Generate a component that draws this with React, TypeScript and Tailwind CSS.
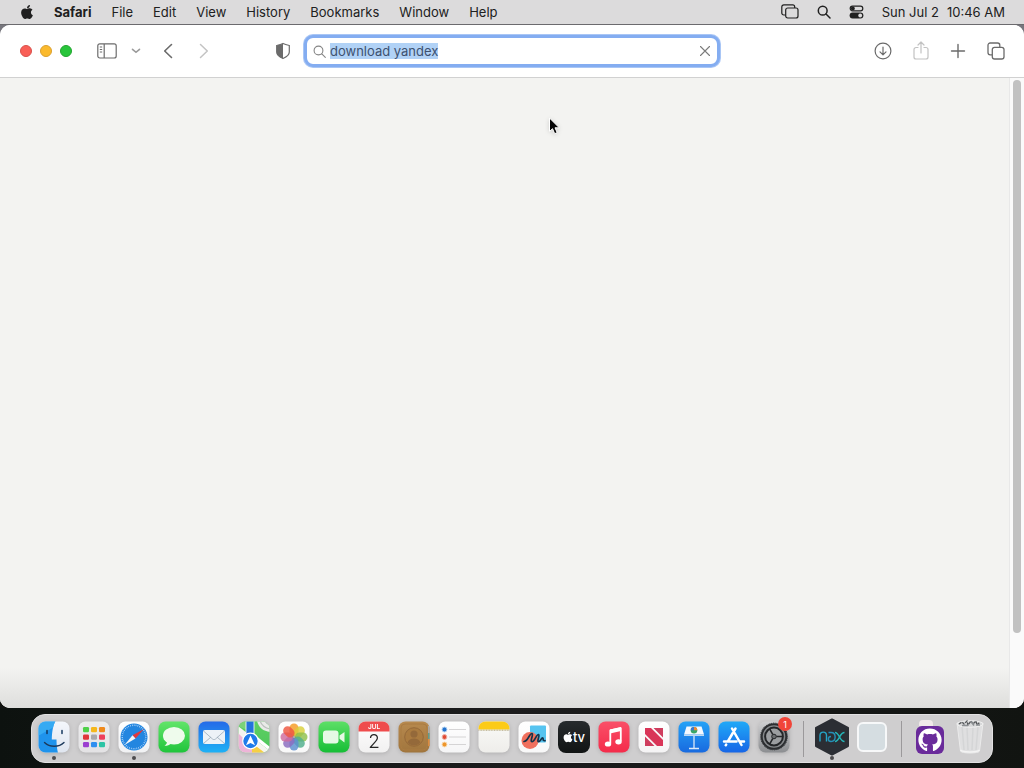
import { useEffect, useRef, useState } from 'react';
import type { ReactNode } from 'react';
import { FaApple, FaGithub } from 'react-icons/fa';

interface DockItem {
  name: string;
  icon: ReactNode;
  running?: boolean;
  badge?: number;
}

const menus = ['File', 'Edit', 'View', 'History', 'Bookmarks', 'Window', 'Help'];

const petals = [
  { angle: 0, color: '#f59b23' },
  { angle: 45, color: '#d9cf3a' },
  { angle: 90, color: '#8fc04b' },
  { angle: 135, color: '#4fae8c' },
  { angle: 180, color: '#5b8fd0' },
  { angle: 225, color: '#8a6bbf' },
  { angle: 270, color: '#cf6a9c' },
  { angle: 315, color: '#ee5540' },
];

const launchpadDots = ['#4fd14a', '#f5b81c', '#f08a1c', '#e0363a', '#a9a9ad', '#ee3f5c', '#9b3fd0', '#2f8ff0', '#2cc4a5'];

function Tile({ id, from, to, children }: { id: string; from: string; to: string; children?: ReactNode }) {
  return (
    <svg viewBox="0 0 32 32" className="h-8 w-8 drop-shadow-sm" aria-hidden="true">
      <defs>
        <linearGradient id={`${id}-bg`} x1="0" y1="0" x2="0" y2="1">
          <stop offset="0" stopColor={from} />
          <stop offset="1" stopColor={to} />
        </linearGradient>
        <clipPath id={`${id}-clip`}>
          <rect x="0.5" y="0.5" width="31" height="31" rx="7" />
        </clipPath>
      </defs>
      <g clipPath={`url(#${id}-clip)`}>
        <rect width="32" height="32" fill={`url(#${id}-bg)`} />
        {children}
      </g>
    </svg>
  );
}

function FinderIcon() {
  return (
    <Tile id="finder" from="#f4f7fc" to="#dfe5ef">
      <path d="M0 0h17.5c-2.3 4.5-3.5 9.500-3.700 18.500h4.700c0 5 .5 9.500 1.500 13.500H0z" fill="#1f93ec" />
      <path d="M0 0h17.500c-1 2-1.800 4-2.400 6.500L0 15z" fill="#45b9f8" opacity=".6" />
      <path d="M9 9.500v3M24 9.500v3" stroke="#15375e" strokeWidth="1.500" strokeLinecap="round" />
      <path d="M6.500 21.500c5 5 14.500 5 19.500 0" fill="none" stroke="#1d3a5c" strokeWidth="1.400" strokeLinecap="round" />
    </Tile>
  );
}

function LaunchpadIcon() {
  return (
    <Tile id="launchpad" from="#ededee" to="#e3e2e4">
      {launchpadDots.map((color, i) => (
        <rect key={color} x={5 + (i % 3) * 8} y={6 + Math.floor(i / 3) * 7.500} width="6" height="5.300" rx="1.200" fill={color} />
      ))}
    </Tile>
  );
}

function SafariIcon() {
  return (
    <Tile id="safari" from="#ffffff" to="#f0f1f3">
      <circle cx="16" cy="16" r="13.500" fill="#2386e0" />
      <circle cx="16" cy="16" r="11.800" fill="none" stroke="#d5eaff" strokeWidth="1.600" strokeDasharray=".6 1.300" />
      <path d="M26 8 17.500 17.500 14.500 14.300z" fill="#e0393e" />
      <path d="M6.500 24 14.500 14.300 17.500 17.500z" fill="#f4f6f8" />
    </Tile>
  );
}

function MessagesIcon() {
  return (
    <Tile id="messages" from="#63e56a" to="#1fc43b">
      <ellipse cx="16" cy="14.800" rx="11" ry="8.800" fill="#eefbec" />
      <path d="M9 20c.2 2-.7 3.600-2.500 4.800 3 0 5-.8 6.500-2.300z" fill="#eefbec" />
    </Tile>
  );
}

function MailIcon() {
  return (
    <Tile id="mail" from="#2569e8" to="#1eb2f5">
      <rect x="5" y="9" width="22" height="14" rx="2" fill="#edf2f7" />
      <path d="m5.500 10 9 8c1 .8 2 .8 3 0l9-8M5.500 22.500l7.500-6.500M26.500 22.500 19 16" fill="none" stroke="#9aa9b8" strokeWidth=".8" />
    </Tile>
  );
}

function MapsIcon() {
  return (
    <Tile id="maps" from="#5fcf63" to="#4cc65a">
      <path d="M0 5l32 25v2H0z" fill="#f5f4f0" />
      <path d="M0 12l20 20H0z" fill="#edb4d8" />
      <path d="M14 22l13 10H14z" fill="#f6cf45" />
      <path d="M0 0h9v9L0 5z" fill="#7bd278" />
      <path d="M19 0c2 7 6 10 13 11V0z" fill="#e9eae7" />
      <path d="M22 0c2 5 5 7 10 8M27 0c1 2 3 3.500 5 4" fill="none" stroke="#b9bebc" strokeWidth="1.200" />
      <path d="M17 14l15 12v4L14 16z" fill="#fff" />
      <path d="M8 0h8v17H8z" fill="#2373dc" stroke="#fff" strokeWidth=".8" />
      <circle cx="12.500" cy="20" r="7.800" fill="#1f7bea" stroke="#fff" strokeWidth="1.200" />
      <path d="M12.500 14.500l4.500 9.800-4.500-2.400L8 24.300z" fill="#fff" />
    </Tile>
  );
}

function PhotosIcon() {
  return (
    <Tile id="photos" from="#ffffff" to="#f8f8f8">
      {petals.map(({ angle, color }) => (
        <rect key={angle} x="11.500" y="2.500" width="9" height="12.500" rx="4.500" fill={color} opacity=".82" transform={`rotate(${angle} 16 16)`} />
      ))}
      <circle cx="16" cy="16" r="1.500" fill="#665b55" opacity=".5" />
    </Tile>
  );
}

function FaceTimeIcon() {
  return (
    <Tile id="facetime" from="#5ee067" to="#15bd35">
      <rect x="5" y="9.500" width="15.500" height="13" rx="3" fill="#e6f9e5" />
      <path d="M21.500 14.500 26.500 11v10.500l-5-3.700z" fill="#e6f9e5" />
    </Tile>
  );
}

function CalendarIcon() {
  return (
    <Tile id="calendar" from="#ffffff" to="#f1f0f0">
      <rect width="32" height="10.500" fill="#ef4c4d" />
      <text x="16" y="8.200" textAnchor="middle" fontFamily="Inter, sans-serif" fontSize="6.500" fontWeight="600" fill="#fff">JUL</text>
      <text x="16" y="26.500" textAnchor="middle" fontFamily="Inter, sans-serif" fontSize="19" fontWeight="300" fill="#252525">2</text>
    </Tile>
  );
}

function ContactsIcon() {
  return (
    <Tile id="contacts" from="#b88a4f" to="#a0753d">
      <path d="M30 5h2v7h-2z" fill="#a8a8a8" />
      <path d="M30 12h2v6h-2z" fill="#5e9c8d" />
      <path d="M30 18h2v7h-2z" fill="#db8b3f" />
      <rect x="3" y="3" width="26" height="26" rx="4" fill="none" stroke="#aa7c43" />
      <circle cx="16" cy="16" r="9.300" fill="#aa7b40" stroke="#94693a" />
      <circle cx="16" cy="13" r="3.600" fill="#94693a" />
      <path d="M9.500 21.500c1.500-5.500 11.500-5.500 13 0-3.500 4-9.500 4-13 0z" fill="#94693a" />
    </Tile>
  );
}

function RemindersIcon() {
  return (
    <Tile id="reminders" from="#ffffff" to="#f5f5f6">
      <path d="M11 8.500h17M11 16h17M11 23.500h17" stroke="#cbcacc" strokeWidth=".8" />
      <circle cx="6.500" cy="8.500" r="2.400" fill="#2674cf" stroke="#a5c8ec" />
      <circle cx="6.500" cy="16" r="2.400" fill="#e04b35" stroke="#efb4a8" />
      <circle cx="6.500" cy="23.500" r="2.400" fill="#ee962c" stroke="#f7d3a3" />
    </Tile>
  );
}

function NotesIcon() {
  return (
    <Tile id="notes" from="#fafaf7" to="#eeedea">
      <rect width="32" height="8.500" fill="#fccb17" />
      <path d="M0 9.200h32" stroke="#a89a6b" strokeWidth=".9" strokeDasharray="1 .6" />
    </Tile>
  );
}

function FreeformIcon() {
  return (
    <Tile id="freeform" from="#ffffff" to="#f8f8f8">
      <rect x="12" y="4.500" width="16" height="17" rx="1" fill="#56c4f0" />
      <circle cx="12" cy="19.500" r="8.500" fill="#f0705e" />
      <path d="M6 20.500c4 0 5.500-8.500 8-8 2 .7-2.500 8 0 8.200 2.500.2 4.500-7.700 6.500-7.200 1.800.6-2 7 0 7.200 1.800.2 2.800-4.200 4.300-3.700 1 .6-.7 3 2.200 2.700" fill="none" stroke="#14334a" strokeWidth="1.700" strokeLinecap="round" />
    </Tile>
  );
}

function TvIcon() {
  return (
    <span className="flex h-8 w-8 items-center justify-center rounded-lg bg-linear-to-b from-[#272b2d] to-[#111414] text-white">
      <FaApple className="h-3 w-2.5" />
      <span className="text-[13px] leading-4 font-medium">tv</span>
    </span>
  );
}

function MusicIcon() {
  return (
    <Tile id="music" from="#fa5068" to="#f42b4a">
      <path d="M12.300 22.500V9.500l10.500-2.300v13" fill="none" stroke="#fff" strokeWidth="1.800" strokeLinejoin="round" />
      <path d="M12 8.500l11-2.500v4l-11 2.500z" fill="#fff" />
      <ellipse cx="10" cy="23" rx="3.200" ry="2.600" fill="#fff" />
      <ellipse cx="20.500" cy="20.800" rx="3.200" ry="2.600" fill="#fff" />
    </Tile>
  );
}

function NewsIcon() {
  return (
    <Tile id="news" from="#ffffff" to="#f4f3f4">
      <path d="M7 7h6l12 12v6h-6L7 13z" fill="#d93558" />
      <path d="M15.500 7H25v9.500zM7 15.500V25h9.500z" fill="#cf3d5e" />
    </Tile>
  );
}

function KeynoteIcon() {
  return (
    <Tile id="keynote" from="#25a3f7" to="#1869df">
      <path d="M8.500 5.500h15l2.500 8H6z" fill="#f3f8ff" />
      <path d="M6 13.500h20v1.500H6z" fill="#bdd8f2" />
      <circle cx="16" cy="9.200" r="3.300" fill="#39a668" />
      <path d="M16 5.900a3.300 3.300 0 0 1 3.300 3.300H16z" fill="#ef8a32" />
      <path d="M12.700 9.200A3.300 3.300 0 0 1 16 5.900v3.300z" fill="#3d77d1" />
      <path d="M16 15v12.500M11 27.500h10" stroke="#dceaf8" strokeWidth="1.300" />
    </Tile>
  );
}

function AppStoreIcon() {
  return (
    <Tile id="appstore" from="#20aaf8" to="#1765e6">
      <g fill="none" stroke="#fff" strokeWidth="2.500" strokeLinecap="round">
        <path d="M17.500 7.500 9.800 20.500M14 7.500l9.500 16.500M6 20.500h12.500M22.500 20.500H26M8.200 23.500 7.700 24.300" />
      </g>
    </Tile>
  );
}

function SettingsIcon() {
  return (
    <Tile id="settings" from="#d0d1d3" to="#8b8d90">
      <circle cx="16" cy="15.500" r="12.300" fill="#85888b" stroke="#2b2d30" strokeWidth="2" />
      <circle cx="16" cy="15.500" r="13.300" fill="none" stroke="#3a3d40" strokeWidth="1.200" strokeDasharray="1 .8" />
      <circle cx="16" cy="15.500" r="8.900" fill="#9b9ea1" stroke="#242629" strokeWidth="2" />
      <circle cx="16" cy="15.500" r="2.300" fill="#6a6d70" stroke="#242629" />
      <path d="M18.500 15.500H25M14.700 17.700 11.500 23.300M14.700 13.300 11.500 7.700" stroke="#242629" strokeWidth="1.600" />
    </Tile>
  );
}

function NoxIcon() {
  return (
    <svg viewBox="0 0 36 40" className="h-10 w-9" aria-hidden="true">
      <path d="M18 2.500 34 11v18L18 37.500 2 29V11z" fill="#2b2e34" stroke="#2b2e34" strokeWidth="2" strokeLinejoin="round" />
      <g fill="none" strokeWidth="1.400">
        <path d="M6 24.500v-6c0-4.500 6.500-4.500 6.500 0v6" stroke="#24a5c8" />
        <path d="M14.500 15.500H17c5.500 0 5.500 9 0 9-3.500 0-3.500-5 0-5" stroke="#2590b8" />
        <path d="M21 15.500c4.500 0 4.500 9 9.500 9M30.500 15.500c-5 0-5 9-9.500 9" stroke="#24b5b8" />
      </g>
    </svg>
  );
}

function TrashIcon() {
  return (
    <svg viewBox="0 0 32 36" className="h-9 w-8" aria-hidden="true">
      <path d="M3 4h26l-3.500 28c-.3 2.700-18.700 2.700-19 0z" fill="#dfdfe0" stroke="#ebebeb" />
      <path d="M8 7l2 24M13 8l1 23M19 8l-1 23M24 7l-2 24" stroke="#d4d5d6" strokeWidth="1.500" />
      <path d="M6.500 31c2 2.500 17 2.500 19 0" fill="none" stroke="#f3f3f3" strokeWidth="1.500" />
      <ellipse cx="16" cy="5" rx="13" ry="3.300" fill="#d8d9da" stroke="#f0f0f0" />
      <path d="M5 5l3-2 2 2 3-3 1 4 3-4 2 3 3-3 1 4 3-3" fill="none" stroke="#55585b" strokeWidth="1.300" strokeDasharray="3 1" />
      <path d="M8 6.500h5M17 2.500l3 4M22 6h4" stroke="#8c9093" strokeWidth="1.500" />
    </svg>
  );
}

const apps: DockItem[] = [
  { name: 'Finder', icon: <FinderIcon />, running: true },
  { name: 'Launchpad', icon: <LaunchpadIcon /> },
  { name: 'Safari', icon: <SafariIcon />, running: true },
  { name: 'Messages', icon: <MessagesIcon /> },
  { name: 'Mail', icon: <MailIcon /> },
  { name: 'Maps', icon: <MapsIcon /> },
  { name: 'Photos', icon: <PhotosIcon /> },
  { name: 'FaceTime', icon: <FaceTimeIcon /> },
  { name: 'Calendar', icon: <CalendarIcon /> },
  { name: 'Contacts', icon: <ContactsIcon /> },
  { name: 'Reminders', icon: <RemindersIcon /> },
  { name: 'Notes', icon: <NotesIcon /> },
  { name: 'Freeform', icon: <FreeformIcon /> },
  { name: 'TV', icon: <TvIcon /> },
  { name: 'Music', icon: <MusicIcon /> },
  { name: 'News', icon: <NewsIcon /> },
  { name: 'Keynote', icon: <KeynoteIcon /> },
  { name: 'App Store', icon: <AppStoreIcon /> },
  { name: 'System Settings', icon: <SettingsIcon />, badge: 1 },
];

const recents: DockItem[] = [
  { name: 'Nox', icon: <NoxIcon />, running: true },
  { name: 'Application', icon: <span className="h-[30px] w-[30px] rounded-md border-2 border-[#f7f8f9] bg-[#d5dde1]" /> },
];

const places: DockItem[] = [
  {
    name: 'GitHub folder',
    icon: (
      <span className="flex flex-col items-start">
        <span className="ml-[3px] h-1.5 w-3.5 rounded-t-sm bg-[#f1eaea]" />
        <span className="flex h-7 w-7 items-center justify-center rounded-md bg-[#6a2b9b]">
          <FaGithub className="h-6 w-6 text-white" />
        </span>
      </span>
    ),
  },
  { name: 'Trash', icon: <TrashIcon /> },
];

function DockGroup({ items }: { items: DockItem[] }) {
  return (
    <>
      {items.map((item) => (
        <button key={item.name} type="button" aria-label={item.name} className="relative flex h-full w-10 items-center justify-center pb-1">
          {item.icon}
          {item.running && <span className="absolute bottom-0.5 h-1 w-1 rounded-full bg-[#4c4b4d]" />}
          {item.badge && (
            <span className="absolute top-0.5 right-0.5 flex h-3.5 w-3.5 items-center justify-center rounded-full bg-[#f14539] text-[9px] leading-none text-white">
              {item.badge}
            </span>
          )}
        </button>
      ))}
    </>
  );
}

function Separator() {
  return <span className="mx-2 h-9 w-0.5 border-r border-[#9b999b]" />;
}

function StackIcon({ className }: { className: string }) {
  return (
    <svg viewBox="0 0 18 18" className={className} fill="none" stroke="currentColor" strokeWidth="1.300" aria-hidden="true">
      <rect x="5.300" y="5.300" width="11.700" height="11.700" rx="2.300" />
      <path d="M5 12.800H3.200A2.200 2.200 0 0 1 1 10.600V3.200A2.200 2.200 0 0 1 3.200 1h7.400a2.200 2.200 0 0 1 2.200 2.200V5" />
    </svg>
  );
}

function MenuBar() {
  return (
    <header className="flex h-[25px] shrink-0 items-center border-b border-[#6b6a6e] bg-[#dcdbdc] pr-[19px] pb-px pl-5 text-[13px] leading-4 text-[#202020]">
      <button type="button" aria-label="Apple menu" className="mr-5">
        <FaApple className="h-4 w-[14px]" />
      </button>
      <nav className="flex items-center gap-5">
        <button type="button" className="font-bold">Safari</button>
        {menus.map((menu) => (
          <button key={menu} type="button">{menu}</button>
        ))}
      </nav>
      <div className="ml-auto flex items-center gap-[18px]">
        <button type="button" aria-label="Stage Manager">
          <svg viewBox="0 0 18 15" className="h-[15px] w-[18px]" fill="none" stroke="currentColor" strokeWidth="1.200" aria-hidden="true">
            <rect x="4.700" y="4" width="12.300" height="10" rx="2" />
            <path d="M4.500 11H2.800A2 2 0 0 1 .8 9V2.900A2 2 0 0 1 2.800.9h8.900a2 2 0 0 1 2 2V4" />
          </svg>
        </button>
        <button type="button" aria-label="Spotlight">
          <svg viewBox="0 0 14 14" className="h-3.5 w-3.5" fill="none" stroke="currentColor" strokeWidth="1.500" strokeLinecap="round" aria-hidden="true">
            <circle cx="5.700" cy="5.700" r="4.400" />
            <path d="m9 9 4 4" />
          </svg>
        </button>
        <button type="button" aria-label="Control Center">
          <svg viewBox="0 0 15 14" className="h-3.5 w-[15px]" aria-hidden="true">
            <rect x="1.200" y="1.200" width="12.600" height="4.600" rx="2.300" fill="none" stroke="currentColor" strokeWidth="1.200" />
            <circle cx="3.800" cy="3.500" r="2" fill="currentColor" />
            <rect x=".6" y="7.500" width="13.800" height="6" rx="3" fill="currentColor" />
            <circle cx="11.200" cy="10.500" r="1.900" fill="#dcdbdc" />
          </svg>
        </button>
        <span className="flex gap-2">
          <span>Sun Jul 2</span>
          <time>10:46 AM</time>
        </span>
      </div>
    </header>
  );
}

function Toolbar() {
  const [query, setQuery] = useState('download yandex');
  const inputRef = useRef<HTMLInputElement>(null);

  useEffect(() => {
    inputRef.current?.focus();
    inputRef.current?.select();
  }, []);

  return (
    <div className="grid h-[53px] shrink-0 grid-cols-[1fr_416px_1fr] items-center border-b border-[#d1d1d1] bg-white text-[#6b6b6b]">
      <div className="flex items-center pr-[13px] pl-5">
        <div className="flex gap-2">
          <button type="button" aria-label="Close window" className="h-3 w-3 rounded-full border border-[#d9504b] bg-[#f95f57]" />
          <button type="button" aria-label="Minimize window" className="h-3 w-3 rounded-full border border-[#dba02e] bg-[#fbba2d]" />
          <button type="button" aria-label="Zoom window" className="h-3 w-3 rounded-full border border-[#21a52f] bg-[#28c53b]" />
        </div>
        <button type="button" aria-label="Show sidebar" className="ml-[25px]">
          <svg viewBox="0 0 20 16" className="h-4 w-5" fill="none" stroke="currentColor" strokeWidth="1.200" aria-hidden="true">
            <rect x=".8" y=".8" width="18.400" height="14.200" rx="2" />
            <path d="M7.200 1v14" />
            <path d="M2.800 4h2.400M2.800 6.500h2.400M2.800 9h2.400" strokeWidth="1" />
          </svg>
        </button>
        <button type="button" aria-label="Tab groups" className="ml-3.5 text-[#9b9b9b]">
          <svg viewBox="0 0 10 6" className="h-1.5 w-2.5" fill="none" stroke="currentColor" strokeWidth="1.600" strokeLinecap="round" aria-hidden="true">
            <path d="m1.500 1.300 3.500 3 3.500-3" />
          </svg>
        </button>
        <button type="button" aria-label="Back" className="ml-[22px]">
          <svg viewBox="0 0 10 16" className="h-4 w-2.5" fill="none" stroke="currentColor" strokeWidth="1.600" strokeLinecap="round" strokeLinejoin="round" aria-hidden="true">
            <path d="M8.500 1.500 1.700 8l6.800 6.500" />
          </svg>
        </button>
        <button type="button" aria-label="Forward" disabled className="ml-[26px] text-[#c3c3c3]">
          <svg viewBox="0 0 10 16" className="h-4 w-2.5" fill="none" stroke="currentColor" strokeWidth="1.500" strokeLinecap="round" strokeLinejoin="round" aria-hidden="true">
            <path d="M1.500 1.500 8.300 8l-6.800 6.500" />
          </svg>
        </button>
        <button type="button" aria-label="Privacy report" className="ml-auto">
          <svg viewBox="0 0 16 18" className="h-[18px] w-4" aria-hidden="true">
            <path d="M8 1.500c2 1 4 1.500 6.300 2v6.500c0 3-2.500 4.800-6.300 6.500-3.800-1.700-6.300-3.500-6.300-6.500V3.500C4 3 6 2.500 8 1.500z" fill="none" stroke="currentColor" strokeWidth="1.200" />
            <path d="M8 1.500v15c-3.800-1.700-6.300-3.500-6.300-6.500V3.500C4 3 6 2.500 8 1.500z" fill="currentColor" />
          </svg>
        </button>
      </div>

      <form className="flex h-8 items-center rounded-[9px] border-[3px] border-[#84adf1] bg-white px-1.5 ring-1 ring-[#a9c6f5]" onSubmit={(e) => e.preventDefault()}>
        <label htmlFor="address" aria-label="Search or enter website name" className="mr-1">
          <svg viewBox="0 0 13 13" className="h-[13px] w-[13px]" fill="none" stroke="#858585" strokeWidth="1.100" strokeLinecap="round" aria-hidden="true">
            <circle cx="5.500" cy="5.500" r="4.400" />
            <path d="m8.800 8.800 3.500 3.500" />
          </svg>
        </label>
        <input
          id="address"
          ref={inputRef}
          type="text"
          value={query}
          onChange={(e) => setQuery(e.target.value)}
          className="h-4 min-w-0 flex-1 bg-transparent text-[13px] leading-4 text-[#3d5170] outline-none selection:bg-[#b1d2f6] selection:text-[#3d5170]"
        />
        <button type="button" aria-label="Clear" onClick={() => setQuery('')}>
          <svg viewBox="0 0 12 12" className="h-3 w-3" fill="none" stroke="#7b7b7b" strokeWidth="1.100" strokeLinecap="round" aria-hidden="true">
            <path d="m1.500 1.500 9 9M10.500 1.500l-9 9" />
          </svg>
        </button>
      </form>

      <div className="flex items-center justify-end gap-[21px] pr-[19px]">
        <button type="button" aria-label="Downloads">
          <svg viewBox="0 0 18 18" className="h-[18px] w-[18px]" fill="none" stroke="currentColor" strokeWidth="1.200" strokeLinecap="round" strokeLinejoin="round" aria-hidden="true">
            <circle cx="9" cy="9" r="7.900" />
            <path d="M9 5v7.500M6 9.800l3 3 3-3" />
          </svg>
        </button>
        <button type="button" aria-label="Share" disabled className="text-[#c2c2c2]">
          <svg viewBox="0 0 16 20" className="h-5 w-4" fill="none" stroke="currentColor" strokeWidth="1.200" strokeLinecap="round" strokeLinejoin="round" aria-hidden="true">
            <path d="M5 6.500H3a2 2 0 0 0-2 2V16a2 2 0 0 0 2 2h10a2 2 0 0 0 2-2V8.500a2 2 0 0 0-2-2h-2M8 12V1.200M5 4l3-3 3 3" />
          </svg>
        </button>
        <button type="button" aria-label="New tab">
          <svg viewBox="0 0 16 16" className="h-4 w-4" fill="none" stroke="currentColor" strokeWidth="1.400" strokeLinecap="round" aria-hidden="true">
            <path d="M8 1.500v13M1.500 8h13" />
          </svg>
        </button>
        <button type="button" aria-label="Tab overview">
          <StackIcon className="h-[18px] w-[18px]" />
        </button>
      </div>
    </div>
  );
}

export default function App() {
  return (
    <div className="flex h-screen flex-col overflow-hidden bg-[#10120f] font-['Inter',sans-serif]">
      <MenuBar />

      <div className="flex min-h-0 flex-1 bg-linear-to-b from-[#77767d] from-10% to-[#10120f] to-30%">
        <main className="relative flex min-w-0 flex-1 flex-col overflow-hidden rounded-[10px] bg-white">
          <Toolbar />
          <div className="flex min-h-0 flex-1">
            <div className="flex flex-1 flex-col justify-end bg-[#f3f3f1]">
              <div className="h-10 bg-linear-to-b from-[#f3f3f1] to-[#dededc]" />
            </div>
            <div className="w-[15px] border-l border-[#e8e8e8] bg-[#fafafa] px-[3px] pt-0.5">
              <div className="h-[88%] w-2 rounded-full bg-[#c1c1c1]" />
            </div>
          </div>
          <svg viewBox="0 0 14 20" className="absolute top-[92px] left-[548px] h-5 w-3.5 drop-shadow-sm" aria-hidden="true">
            <path d="M1.500 1v13.500l3-2.800 2.200 5 2.500-1.100L7 10.800h4.300z" fill="#050505" stroke="#fff" strokeWidth="1" />
          </svg>
        </main>
      </div>

      <footer className="flex shrink-0 justify-center bg-linear-to-r from-[#0d120f] via-[#1c1c1d] to-[#111411] pt-1.5 pb-[5px]">
        <nav aria-label="Dock" className="flex h-[49px] items-center rounded-[14px] border border-[#e2e1e2] bg-[#cfcecf] px-0.5">
          <DockGroup items={apps} />
          <Separator />
          <DockGroup items={recents} />
          <Separator />
          <DockGroup items={places} />
        </nav>
      </footer>
    </div>
  );
}
